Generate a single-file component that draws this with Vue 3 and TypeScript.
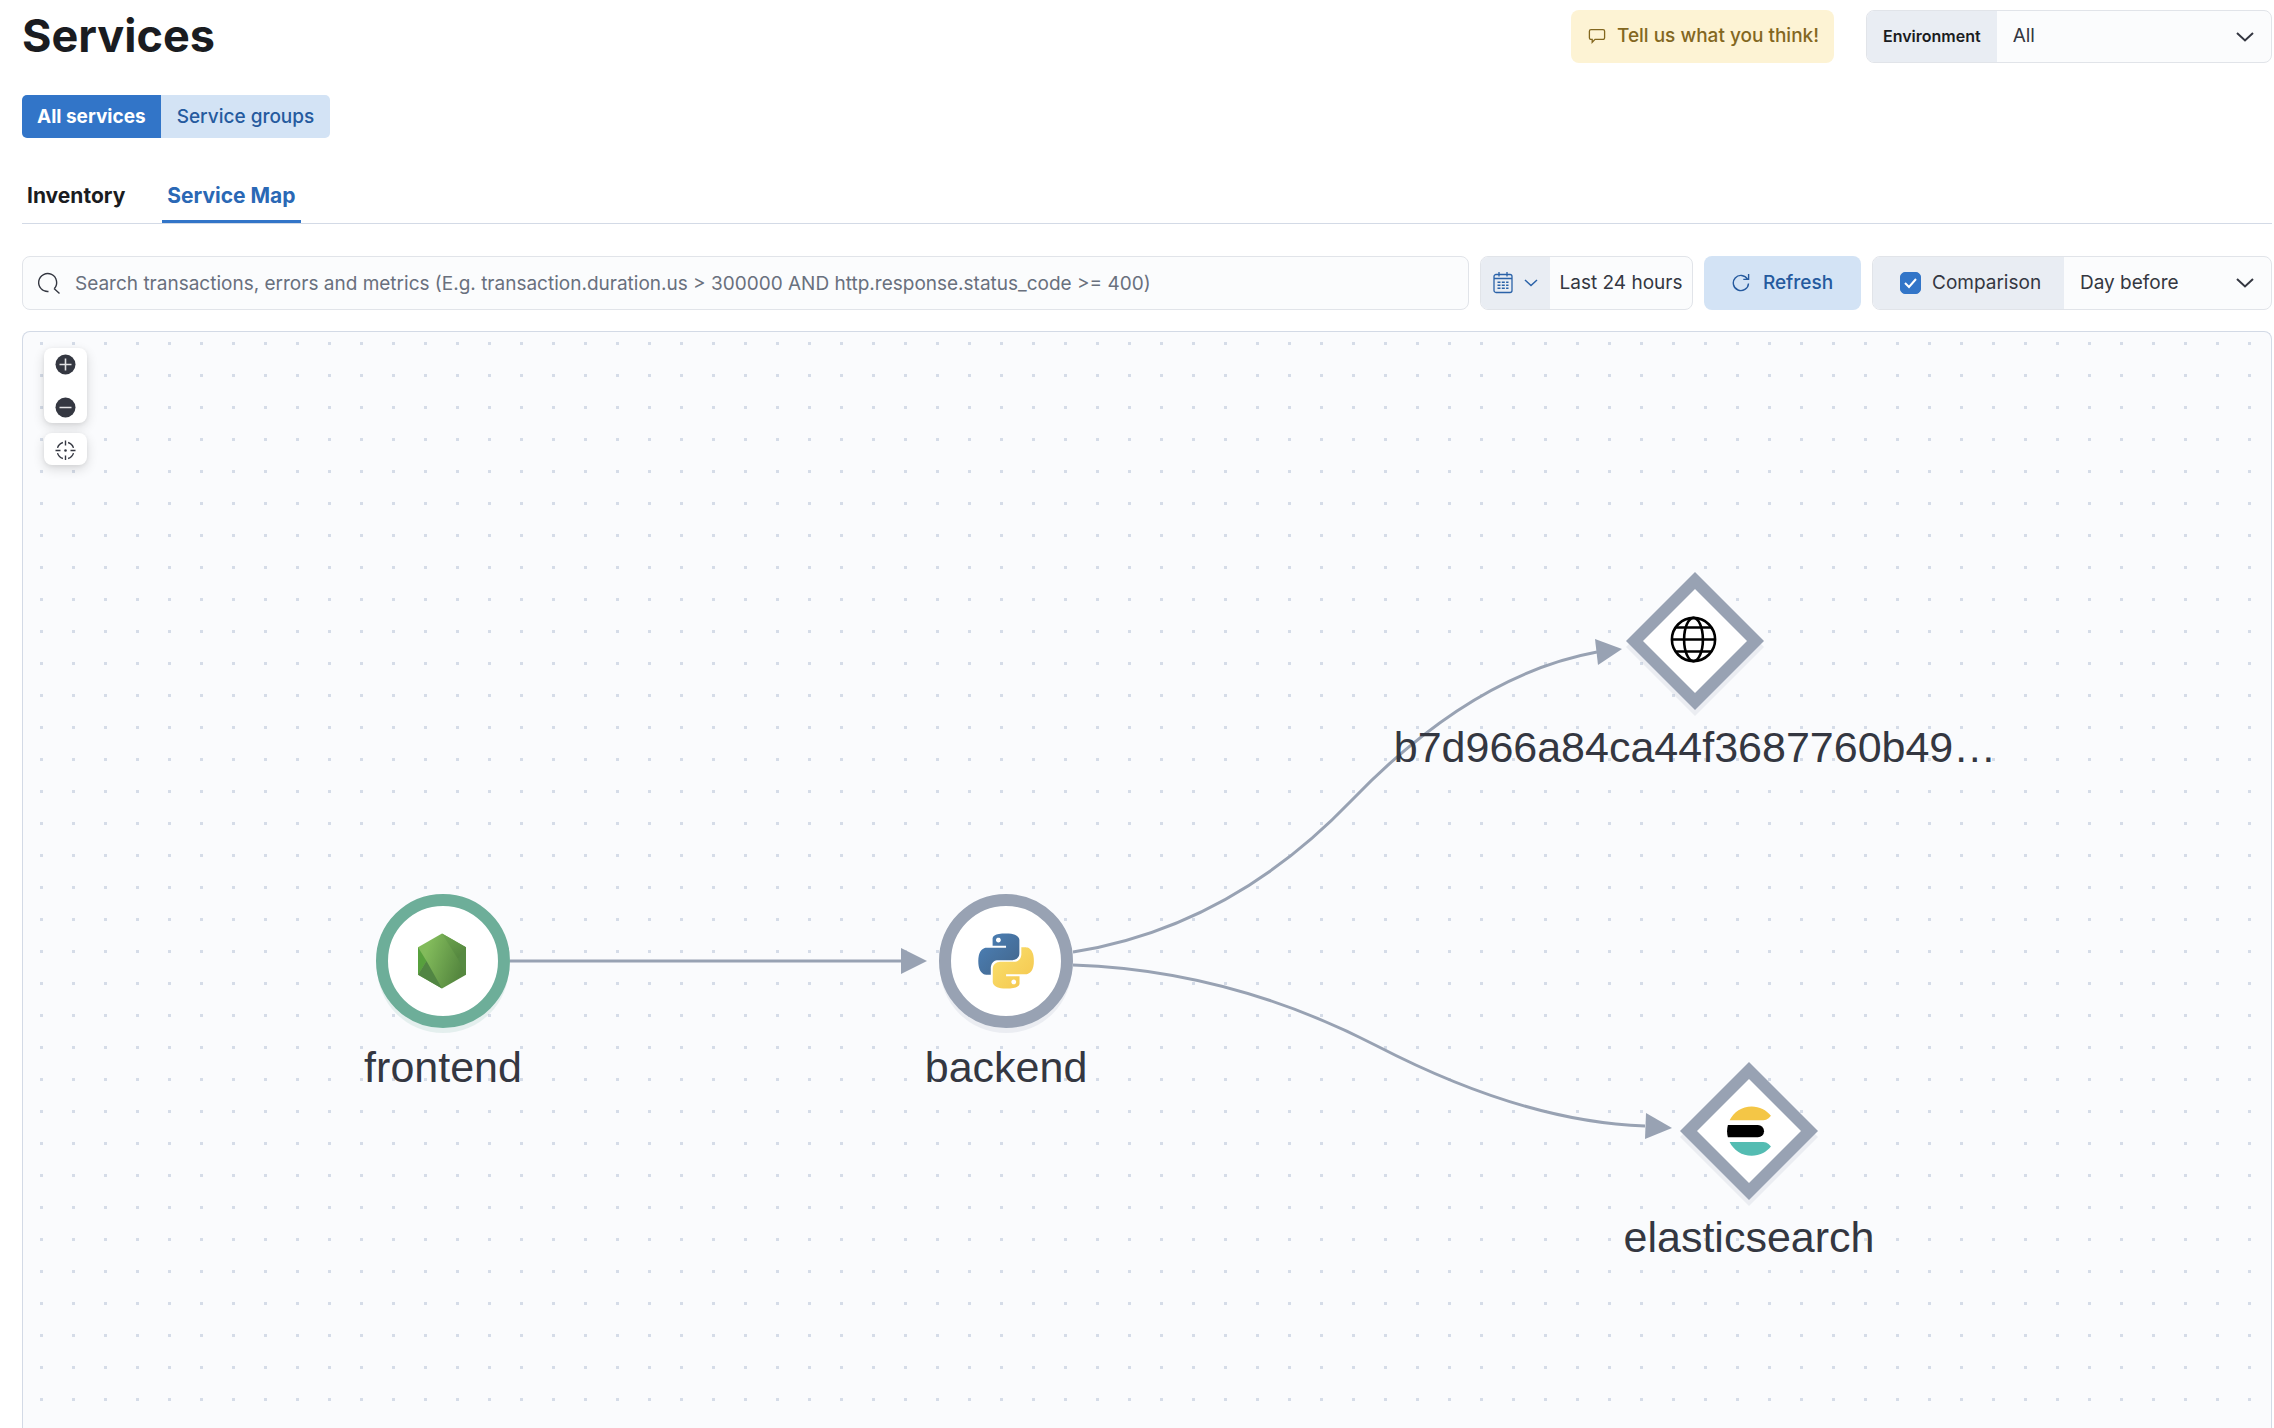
<script setup lang="ts">
import { ref } from 'vue'

interface MapNode {
  id: string
  label: string
  shape: 'circle' | 'diamond'
  icon: 'nodejs' | 'python' | 'globe' | 'elasticsearch'
  color: string
  x: number
  y: number
}

interface MapEdge {
  id: string
  path: string
  arrow: string
}

const environment = ref('All')
const query = ref('')
const comparison = ref(true)
const offset = ref('Day before')

// x and y are the centre of each node on the canvas
const nodes: MapNode[] = [
  { id: 'frontend', label: 'frontend', shape: 'circle', icon: 'nodejs', color: '#6dae99', x: 420, y: 629 },
  { id: 'backend', label: 'backend', shape: 'circle', icon: 'python', color: '#98a2b3', x: 983, y: 629 },
  { id: 'external', label: 'b7d966a84ca44f3687760b49…', shape: 'diamond', icon: 'globe', color: '#98a2b3', x: 1672, y: 309 },
  { id: 'elasticsearch', label: 'elasticsearch', shape: 'diamond', icon: 'elasticsearch', color: '#98a2b3', x: 1726, y: 799 },
]

const edges: MapEdge[] = [
  { id: 'frontend-backend', path: 'M487 629H878', arrow: '878,616 904,629 878,642' },
  { id: 'backend-external', path: 'M1050 620Q1207 595 1328 469T1574 320', arrow: '1572,307 1599,317 1575,333' },
  { id: 'backend-elasticsearch', path: 'M1050 633Q1207 638 1354 714T1622 794', arrow: '1623,781 1649,796 1622,807' },
]
</script>

<template>
  <main class="page">
    <header class="header">
      <h1>Services</h1>
      <div class="header-actions">
        <button class="feedback" type="button">
          <svg width="18" height="18" viewBox="0 0 18 18" fill="none" stroke="currentColor" stroke-width="1.3">
            <path d="M3 2.600h12a1.600 1.600 0 0 1 1.600 1.600v6.600a1.600 1.600 0 0 1-1.600 1.600H7l-2.800 3v-3H3a1.600 1.600 0 0 1-1.600-1.600V4.200A1.600 1.600 0 0 1 3 2.600z" />
          </svg>
          Tell us what you think!
        </button>
        <div class="control environment">
          <label class="prepend" for="environment">Environment</label>
          <div class="select">
            <select id="environment" v-model="environment">
              <option>All</option>
            </select>
            <svg width="18" height="10" viewBox="0 0 18 10"><path d="M1 1l8 7.500L17 1" /></svg>
          </div>
        </div>
      </div>
    </header>

    <div class="button-group">
      <button class="group-button selected" type="button">All services</button>
      <button class="group-button" type="button">Service groups</button>
    </div>

    <nav class="tabs">
      <a class="tab" href="#inventory">Inventory</a>
      <a class="tab active" href="#service-map">Service Map</a>
    </nav>

    <div class="toolbar">
      <div class="control search">
        <svg width="24" height="24" viewBox="0 0 24 24" fill="none" stroke="#343741" stroke-width="1.400">
          <path d="M11.500 20.500A9 9 0 1 1 17.400 17.500M17 17.500l5.500 5" />
        </svg>
        <input
          v-model="query"
          type="text"
          aria-label="Search"
          placeholder="Search transactions, errors and metrics (E.g. transaction.duration.us > 300000 AND http.response.status_code >= 400)"
        />
      </div>

      <div class="control date">
        <button class="quick" type="button" aria-label="Date quick select">
          <svg width="20" height="22" viewBox="0 0 20 22" fill="none" stroke="currentColor" stroke-width="1.300">
            <rect x="1" y="2.500" width="18" height="18" rx="2" />
            <path d="M1 6.500h18M6 0v4.500M14 0v4.500" />
            <path d="M4.500 10.300h11M4.500 13.300h11M4.500 16.300h11" stroke-dasharray="3 1.300" stroke-width="1.500" />
          </svg>
          <svg width="14" height="8" viewBox="0 0 14 8" fill="none" stroke="currentColor" stroke-width="1.500"><path d="M1 1l6 5.500L13 1" /></svg>
        </button>
        <button class="range" type="button">Last 24 hours</button>
      </div>

      <button class="refresh" type="button">
        <svg width="18" height="20" viewBox="0 0 18 20" fill="none" stroke="currentColor" stroke-width="1.400">
          <path d="M15.500 6.200A7.600 7.600 0 1 0 16.500 10.500M16.600 1v5.400H11.300" />
        </svg>
        Refresh
      </button>

      <div class="control comparison">
        <label class="prepend check">
          <span class="box">
            <input v-model="comparison" type="checkbox" />
            <svg width="15" height="12" viewBox="0 0 15 12"><path d="M2 6l4 4 7-8" /></svg>
          </span>
          Comparison
        </label>
        <div class="select">
          <select v-model="offset" aria-label="Comparison period">
            <option>Day before</option>
          </select>
          <svg width="18" height="10" viewBox="0 0 18 10"><path d="M1 1l8 7.500L17 1" /></svg>
        </div>
      </div>
    </div>

    <section class="map" aria-label="Service map">
      <svg class="edges" aria-hidden="true">
        <g v-for="edge in edges" :key="edge.id">
          <path :d="edge.path" />
          <polygon :points="edge.arrow" />
        </g>
      </svg>

      <div v-for="node in nodes" :key="node.id" class="node" :style="{ left: node.x + 'px', top: node.y + 'px' }">
        <svg class="shape" width="140" height="150" viewBox="-70 -70 140 150">
          <template v-if="node.shape === 'circle'">
            <circle cy="6" r="66" :fill="node.color" opacity=".15" />
            <circle r="61" fill="#fff" :stroke="node.color" stroke-width="12" />
          </template>
          <template v-else>
            <path d="M0-69L69 0 0 69-69 0z" transform="translate(0 6)" :fill="node.color" opacity=".15" />
            <path d="M0-69L69 0 0 69-69 0z" :fill="node.color" />
            <path d="M0-52L52 0 0 52-52 0z" fill="#fff" />
          </template>

          <g v-if="node.icon === 'nodejs'" transform="translate(-1 0)">
            <defs>
              <linearGradient id="node-body" x1="0" y1=".3" x2="1" y2=".7">
                <stop offset=".15" stop-color="#82bb5b" />
                <stop offset=".9" stop-color="#55873f" />
              </linearGradient>
              <linearGradient id="node-right" x1="0" y1="0" x2=".6" y2="1">
                <stop offset="0" stop-color="#6fa850" />
                <stop offset="1" stop-color="#55873f" />
              </linearGradient>
            </defs>
            <path d="M0-27.500L24-13.800V13.800L0 27.500-24 13.800V-13.800z" fill="url(#node-body)" />
            <path d="M0-27.500L24-13.800 16-2z" fill="url(#node-right)" />
            <path d="M24-13.800V13.800L16-2z" fill="#568a42" />
            <path d="M-24-13.800L-15.500 0-24 13.800z" fill="#57a03d" />
            <path d="M-15.500 0L0 27.500-24 13.800z" fill="#518543" />
          </g>

          <g v-else-if="node.icon === 'python'" transform="translate(-27.600 -27.600) scale(2.300)">
            <defs>
              <linearGradient id="py-blue" x1="0" y1="0" x2="1" y2="1">
                <stop offset=".2" stop-color="#4a7cb0" />
                <stop offset="1" stop-color="#426488" />
              </linearGradient>
              <linearGradient id="py-yellow" x1="0" y1="0" x2="1" y2="1">
                <stop offset=".2" stop-color="#f9dc68" />
                <stop offset="1" stop-color="#f4c54d" />
              </linearGradient>
            </defs>
            <path fill="url(#py-blue)" d="M14.25.18l.9.2.73.26.59.3.45.32.34.34.25.34.16.33.1.3.04.26.02.2-.01.13V8.5l-.05.63-.13.55-.21.46-.26.38-.3.31-.33.25-.35.19-.35.14-.33.1-.3.07-.26.04-.21.02H8.77l-.69.05-.59.14-.5.22-.41.27-.33.32-.27.35-.2.36-.15.37-.1.35-.07.32-.04.27-.02.21v3.06H3.17l-.21-.03-.28-.07-.32-.12-.35-.18-.36-.26-.36-.36-.35-.46-.32-.59-.28-.73-.21-.88-.14-1.05-.05-1.23.06-1.22.16-1.04.24-.87.32-.71.36-.57.4-.44.42-.33.42-.24.4-.16.36-.1.32-.05.24-.01h.16l.06.01h8.16v-.83H6.18l-.01-2.75-.02-.37.05-.34.11-.31.17-.28.25-.26.31-.23.38-.2.44-.18.51-.15.58-.12.64-.1.71-.06.77-.04.84-.02 1.27.05zm-6.300 1.980l-.23.33-.08.41.08.41.23.34.33.22.41.09.41-.09.33-.22.23-.34.08-.41-.08-.41-.23-.33-.33-.22-.41-.09-.41.09z" />
            <path fill="url(#py-yellow)" d="M21.1 6.110l.28.06.32.12.35.18.36.27.36.35.35.47.32.59.28.73.21.88.14 1.04.05 1.23-.06 1.23-.16 1.04-.24.86-.32.71-.36.57-.4.45-.42.33-.42.24-.4.16-.36.09-.32.05-.24.02-.16-.01h-8.22v.82h5.84l.01 2.76.02.36-.05.34-.11.31-.17.29-.25.25-.31.24-.38.2-.44.17-.51.15-.58.13-.64.09-.71.07-.77.04-.84.01-1.27-.04-1.07-.14-.9-.2-.73-.25-.59-.3-.45-.33-.34-.34-.25-.34-.16-.33-.1-.3-.04-.25-.02-.2.01-.13v-5.34l.05-.64.13-.54.21-.46.26-.38.3-.32.33-.24.35-.2.35-.14.33-.1.3-.06.26-.04.21-.02.13-.01h5.84l.69-.05.59-.14.5-.21.41-.28.33-.32.27-.35.2-.36.15-.36.1-.35.07-.32.04-.28.02-.21V6.070h2.090l.14.01zm-6.470 14.250l-.23.33-.08.41.08.41.23.33.33.23.41.08.41-.08.33-.23.23-.33.08-.41-.08-.41-.23-.33-.33-.23-.41-.08-.41.08z" />
          </g>

          <g v-else-if="node.icon === 'globe'" transform="translate(-1.500 -1.500)" fill="none" stroke="#000" stroke-width="2.600">
            <circle r="21.600" />
            <ellipse rx="9.400" ry="21.600" />
            <path d="M-21.600 0H21.600M-18-12H18M-18 12H18" />
          </g>

          <g v-else transform="translate(-25 -24.500) scale(1.540)">
            <path d="M2 16c0 1.384.194 2.720.524 4H22a4 4 0 0 0 0-8H2.524A15.984 15.984 0 0 0 2 16z" />
            <path fill="#f4c646" d="M28.924 7.662A15.381 15.381 0 0 0 30.480 6C27.547 2.346 23.050 0 18 0 11.679 0 6.239 3.678 3.644 9H25.510a5.039 5.039 0 0 0 3.413-1.338" />
            <path fill="#54bcb2" d="M25.510 23H3.645C6.240 28.323 11.679 32 18 32c5.050 0 9.547-2.346 12.480-6a15.381 15.381 0 0 0-1.556-1.662A5.034 5.034 0 0 0 25.510 23" />
          </g>
        </svg>
        <span class="label">{{ node.label }}</span>
      </div>

      <div class="controls">
        <div class="panel">
          <button type="button" aria-label="Zoom in">
            <svg width="21" height="21" viewBox="-10.500 -10.500 21 21">
              <circle r="10" fill="#343741" />
              <path d="M-6 0H6M0-6V6" stroke="#e3e3e5" stroke-width="1.600" />
            </svg>
          </button>
          <button type="button" aria-label="Zoom out">
            <svg width="21" height="21" viewBox="-10.500 -10.500 21 21">
              <circle r="10" fill="#343741" />
              <path d="M-6 0H6" stroke="#e3e3e5" stroke-width="1.600" />
            </svg>
          </button>
        </div>
        <div class="panel">
          <button type="button" aria-label="Center">
            <svg width="21" height="21" viewBox="-10.500 -11.500 21 21" fill="none" stroke="#343741" stroke-width="1.400">
              <path d="M2.600-8A8.400 8.400 0 0 1 8-2.600M8 2.600A8.400 8.400 0 0 1 2.600 8M-2.600 8A8.400 8.400 0 0 1-8 2.600M-8-2.600A8.400 8.400 0 0 1-2.600-8" />
              <path d="M0-10v5M0 9.500V5M-10 0h5M10 0H5" />
              <circle r="1.300" fill="#343741" stroke="none" />
            </svg>
          </button>
        </div>
      </div>
    </section>
  </main>
</template>

<style>
body {
  margin: 0;
  background: #fff;
}
</style>

<style scoped>
.page {
  box-sizing: border-box;
  display: flex;
  flex-direction: column;
  min-height: 100vh;
  padding: 9px 2px 0 22px;
  overflow: hidden;
  color: #343741;
  font-family: Inter, "Liberation Sans", sans-serif;
  font-size: 19px;
  line-height: 24px;
}

button,
input,
select {
  margin: 0;
  padding: 0;
  border: 0;
  background: none;
  color: inherit;
  font: inherit;
}

svg {
  display: block;
  flex: none;
}

.header {
  display: flex;
  align-items: center;
  justify-content: space-between;
  height: 54px;
}

h1 {
  margin: 0;
  color: #1a1c21;
  font-size: 45px;
  font-weight: 700;
  line-height: 54px;
}

.header-actions {
  display: flex;
  gap: 32px;
}

.feedback {
  display: flex;
  align-items: center;
  gap: 11px;
  height: 53px;
  padding: 0 15px 0 17px;
  border-radius: 8px;
  background: #fdf3d4;
  color: #83671f;
  font-weight: 500;
}

.control {
  box-sizing: border-box;
  display: flex;
  height: 54px;
  overflow: hidden;
  border: 1px solid #e1e4e9;
  border-radius: 8px;
  background: #fbfcfd;
}

.prepend {
  display: flex;
  align-items: center;
  background: #e9edf3;
}

.environment {
  width: 406px;
  height: 53px;
}

.environment .prepend {
  padding: 0 16px;
  color: #1a1c21;
  font-size: 16px;
  font-weight: 600;
}

.select {
  position: relative;
  display: flex;
  flex: 1;
}

.select select {
  flex: 1;
  min-width: 0;
  padding: 0 48px 0 16px;
  appearance: none;
}

.select svg {
  position: absolute;
  top: 21px;
  right: 17px;
  fill: none;
  stroke: #343741;
  stroke-width: 2;
  pointer-events: none;
}

.button-group {
  display: flex;
  align-self: flex-start;
  margin-top: 32px;
  overflow: hidden;
  border-radius: 5px;
}

.group-button {
  height: 43px;
  padding: 0 16px;
  background: #d3e3f5;
  color: #255a9e;
  font-weight: 500;
}

.group-button.selected {
  padding: 0 15px;
  background: #3275c8;
  color: #fff;
  font-weight: 700;
}

.tabs {
  display: flex;
  gap: 32px;
  margin-top: 32px;
  border-bottom: 1px solid #d3dae6;
}

.tab {
  padding: 14px 5px 12px;
  border-bottom: 3px solid transparent;
  color: #1a1c21;
  font-size: 21px;
  font-weight: 700;
  text-decoration: none;
}

.tab.active {
  border-color: #3275c8;
  color: #2a68b5;
}

.toolbar {
  display: flex;
  gap: 11px;
  margin-top: 32px;
}

.search {
  flex: 1;
  align-items: center;
  gap: 14px;
  padding: 0 16px 0 14px;
}

.search input {
  flex: 1;
  min-width: 0;
  height: 100%;
  outline: 0;
}

.search input::placeholder {
  color: #69707d;
  opacity: 1;
}

.date {
  width: 213px;
}

.quick {
  display: flex;
  align-items: center;
  justify-content: center;
  gap: 11px;
  width: 69px;
  background: #e9edf3;
  color: #2a62a8;
}

.range {
  flex: 1;
  white-space: nowrap;
}

.refresh {
  display: flex;
  align-items: center;
  justify-content: center;
  gap: 13px;
  width: 157px;
  height: 54px;
  border-radius: 8px;
  background: #d3e3f5;
  color: #255a9e;
  font-weight: 500;
}

.comparison {
  width: 400px;
}

.check {
  box-sizing: border-box;
  gap: 11px;
  width: 191px;
  padding-left: 27px;
}

.box {
  display: grid;
  place-items: center;
}

.box input,
.box svg {
  grid-area: 1 / 1;
}

.box input {
  box-sizing: border-box;
  width: 21px;
  height: 22px;
  border: 1px solid #3275c8;
  border-radius: 5px;
  background: #fff;
  appearance: none;
}

.box input:checked {
  background: #3275c8;
}

.box svg {
  fill: none;
  stroke: #fff;
  stroke-width: 2;
  pointer-events: none;
}

.map {
  position: relative;
  flex: 1;
  min-height: 900px;
  margin-top: 21px;
  overflow: hidden;
  border: 1px solid #d3dae6;
  border-bottom: 0;
  border-radius: 8px 8px 0 0;
  background:
    conic-gradient(from 90deg at 29px 29px, #d5dce8 25%, transparent 0) -12px -19px / 32px 32px,
    #fafbfd;
}

.edges {
  position: absolute;
  inset: 0;
  width: 100%;
  height: 100%;
}

.edges path {
  fill: none;
  stroke: #98a2b3;
  stroke-width: 3;
}

.edges polygon {
  fill: #98a2b3;
}

.node {
  position: absolute;
  display: flex;
  flex-direction: column;
  align-items: center;
  width: 0;
}

.shape {
  margin-top: -70px;
}

.label {
  color: #343741;
  font-family: "Liberation Sans", Arial, sans-serif;
  font-size: 43px;
  line-height: 52px;
  white-space: nowrap;
}

.controls {
  position: absolute;
  top: 16px;
  left: 21px;
  display: flex;
  flex-direction: column;
  gap: 10px;
}

.panel {
  display: flex;
  flex-direction: column;
  gap: 11px;
  width: 43px;
  border-radius: 8px;
  background: #fff;
  box-shadow: 0 4px 12px rgba(0, 0, 0, 0.14), 0 1px 4px rgba(0, 0, 0, 0.06);
}

.panel button {
  display: flex;
  align-items: center;
  justify-content: center;
  height: 32px;
}
</style>
